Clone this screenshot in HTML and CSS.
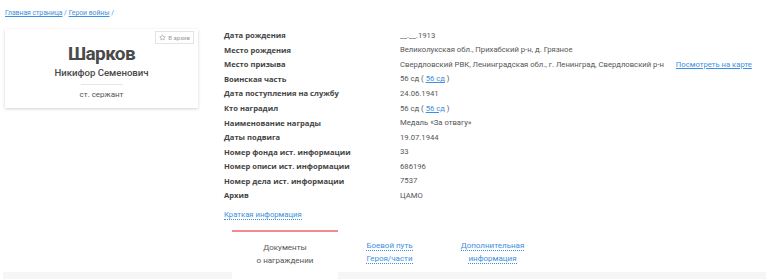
FILE: index.html
```html
<!DOCTYPE html>
<html lang="ru">
<head>
<meta charset="utf-8">
<link rel="stylesheet" href="styles.css">
</head>
<body>
<div class="crumbs"><a href="#">Главная страница</a> / <a href="#">Герои войны</a> /</div>
<div class="main">
  <div class="card">
    <span class="badge"><svg width="7" height="7" viewBox="0 0 24 24"><path d="M12 2.5l2.9 6.1 6.6.8-4.9 4.6 1.3 6.6L12 17.3l-5.9 3.3 1.3-6.6-4.9-4.6 6.6-.8z" fill="none" stroke="#999" stroke-width="2" stroke-linejoin="round"/></svg>В архив</span>
    <div class="surname">Шарков</div>
    <div class="name">Никифор Семенович</div>
    <div class="sep"></div>
    <div class="rank">ст. сержант</div>
  </div>
  <div class="info">
    <div class="rows">
      <div class="l">Дата рождения</div><div class="v">__.__.1913</div>
      <div class="l">Место рождения</div><div class="v">Великолукская обл., Прихабский р-н, д. Грязное</div>
      <div class="l">Место призыва</div><div class="v">Свердловский РВК, Ленинградская обл., г. Ленинград, Свердловский р-н <a class="map" href="#">Посмотреть на карте</a></div>
      <div class="l">Воинская часть</div><div class="v">56 сд ( <a href="#">56 сд</a> )</div>
      <div class="l">Дата поступления на службу</div><div class="v">24.06.1941</div>
      <div class="l">Кто наградил</div><div class="v">56 сд ( <a href="#">56 сд</a> )</div>
      <div class="l">Наименование награды</div><div class="v">Медаль «За отвагу»</div>
      <div class="l">Даты подвига</div><div class="v">19.07.1944</div>
      <div class="l">Номер фонда ист. информации</div><div class="v">33</div>
      <div class="l">Номер описи ист. информации</div><div class="v">686196</div>
      <div class="l">Номер дела ист. информации</div><div class="v">7537</div>
      <div class="l">Архив</div><div class="v">ЦАМО</div>
    </div>
    <div class="short"><span>Краткая информация</span></div>
  </div>
</div>
<div class="tabbar">
  <div class="tabs">
    <div class="tab active">Документы<br>о награждении</div>
    <div class="tab"><span>Боевой путь</span><br><span>Героя/части</span></div>
    <div class="tab"><span>Дополнительная</span><br><span>информация</span></div>
  </div>
</div>
</body>
</html>
```
FILE: styles.css
```css
html, body { margin: 0; padding: 0; background: #fff; }
body { font-family: "Roboto", "Open Sans", sans-serif; color: #555; font-size: 8px; width: 766px; height: 280px; overflow: hidden; }
a { color: #3d8fe0; }
.crumbs { padding: 9px 0 0 5px; height: 12px; font-size: 6.8px; color: #3d8fe0; }
.crumbs a { text-decoration: underline; }
.main { display: flex; padding: 8px 0 0 5px; gap: 26px; }
.card { position: relative; width: 193px; height: 79px; box-shadow: 0 1px 3px rgba(0,0,0,.18); box-sizing: border-box; text-align: center; padding-top: 13px; color: #444; }
.badge { position: absolute; top: 2px; right: 4px; border: 1px solid #e4e4e4; font-size: 6px; color: #9a9a9a; padding: 2px 3px; display: flex; align-items: center; gap: 2px; line-height: 7px; }
.surname { font-size: 19px; font-weight: 700; line-height: 24px; color: #4a4a4a; letter-spacing: -0.6px; }
.name { font-size: 9.6px; font-weight: 500; line-height: 13px; color: #4a4a4a; }
.sep { width: 42px; height: 1px; background: #e6e6e6; margin: 5px auto 4px; }
.rank { font-size: 8px; line-height: 11px; color: #555; }
.info { margin-top: -1px; }
.rows { display: grid; grid-template-columns: 176px auto; grid-auto-rows: 14.55px; align-items: center; }
.l { font-family: "Open Sans", sans-serif; font-weight: 700; color: #444; font-size: 7.6px; }
.v { color: #555; font-size: 7.7px; white-space: nowrap; }
.v a { text-decoration: underline; }
.map { margin-left: 10px; }
.short { margin-top: 7px; font-size: 7.7px; }
.short span { color: #3d8fe0; border-bottom: 1px dotted #3d8fe0; }
.tabbar { margin: 11px 0 0 3px; height: 49px; background: linear-gradient(#fff 0 42px, #f6f6f6 42px); padding-left: 229px; }
.tabs { display: flex; height: 49px; }
.tab { width: 103px; box-sizing: border-box; padding-top: 9px; text-align: center; line-height: 13px; font-size: 8px; color: #3d8fe0; }
.tab span { border-bottom: 1px dotted #3d8fe0; }
.tab.active { width: 106px; background: #fff; border-top: 2px solid #f28b8b; color: #555; }
```
